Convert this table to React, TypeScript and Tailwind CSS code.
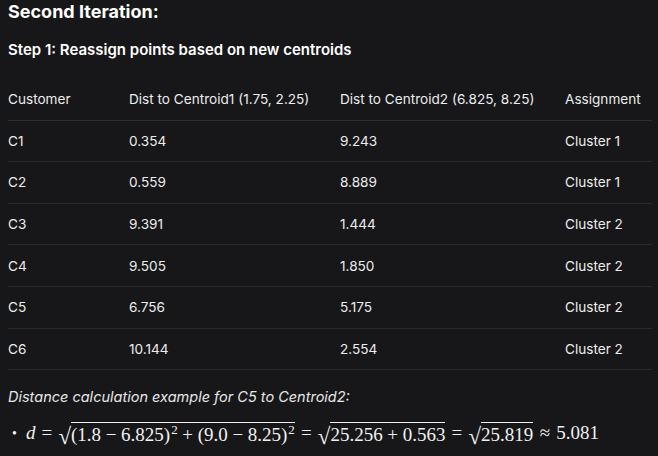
const rows = [
  ['C1', '0.354', '9.243', 'Cluster 1'],
  ['C2', '0.559', '8.889', 'Cluster 1'],
  ['C3', '9.391', '1.444', 'Cluster 2'],
  ['C4', '9.505', '1.850', 'Cluster 2'],
  ['C5', '6.756', '5.175', 'Cluster 2'],
  ['C6', '10.144', '2.554', 'Cluster 2'],
]

const cols = 'grid grid-cols-[121px_211px_225px_1fr] items-center'

function Sqrt({ children }: { children: React.ReactNode }) {
  return (
    <span className="inline-flex items-end">
      <span className="text-[23px] leading-none translate-y-[2px]">√</span>
      <span className="border-t border-[#eeeeee] pt-[1px] leading-[22px]">{children}</span>
    </span>
  )
}

// binary operator / relation with KaTeX-like spacing
function Op({ c, rel }: { c: string; rel?: boolean }) {
  return (
    <span className={`inline-block text-center ${rel ? 'w-[15px] mx-[4px]' : 'w-[14px] mx-[3px]'}`}>{c}</span>
  )
}

function Sq() {
  return <sup className="text-[13px] ml-[1px]">2</sup>
}

export default function App() {
  return (
    <div className="w-[658px] h-[456px] overflow-hidden bg-[#171719] px-2 text-[#ececec] font-['Inter','Noto_Sans',sans-serif]">
      <h1 className="text-[18px] font-bold leading-6 text-white">Second Iteration:</h1>
      <h2 className="mt-4 text-[15px] font-semibold leading-5 text-white">
        Step 1: Reassign points based on new centroids
      </h2>

      <div className="mt-[19px] w-[644px] text-[13.6px] leading-5">
        <div className={`${cols} h-[41.5px] border-b border-[#2e2e32]`}>
          <span>Customer</span>
          <span>Dist to Centroid1 (1.75, 2.25)</span>
          <span>Dist to Centroid2 (6.825, 8.25)</span>
          <span>Assignment</span>
        </div>
        {rows.map((r) => (
          <div key={r[0]} className={`${cols} h-[41.67px] border-b border-[#2a2a2e]`}>
            {r.map((c, i) => (
              <span key={i}>{c}</span>
            ))}
          </div>
        ))}
      </div>

      <p className="mt-[17px] text-[14.5px] italic leading-5 text-[#e6e6e6]">
        Distance calculation example for C5 to Centroid2:
      </p>

      <div className="mt-[12px] flex items-center pl-[4px] text-[19px] text-[#f0f0f0] font-['Liberation_Serif','DejaVu_Serif',serif]">
        <span className="mr-[9px] text-[14px]">•</span>
        <span className="italic">d</span>
        <Op c="=" rel />
        <Sqrt>
          (1.8<Op c="−" />6.825)<Sq />
          <Op c="+" />
          (9.0<Op c="−" />8.25)<Sq />
        </Sqrt>
        <Op c="=" rel />
        <Sqrt>
          25.256<Op c="+" />0.563
        </Sqrt>
        <Op c="=" rel />
        <Sqrt>25.819</Sqrt>
        <Op c="≈" rel />
        <span>5.081</span>
      </div>
    </div>
  )
}
